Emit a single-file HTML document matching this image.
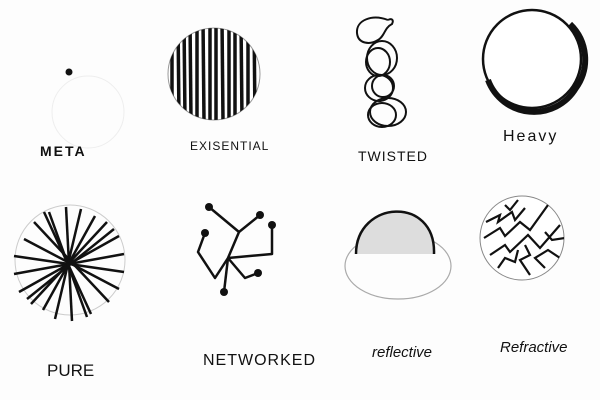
<!DOCTYPE html>
<html><head><meta charset="utf-8"><style>
html,body{margin:0;padding:0;background:#fff;}
svg{display:block}
text{font-family:"Liberation Sans",sans-serif;fill:#111;}
</style></head><body>
<svg width="600" height="400" viewBox="0 0 600 400" xmlns="http://www.w3.org/2000/svg">
<rect width="600" height="400" fill="#fdfdfd"/>
<!-- META -->
<circle cx="88" cy="112" r="36" fill="none" stroke="#eee" stroke-width="1"/>
<circle cx="69" cy="72" r="3.5" fill="#111"/>
<text x="40" y="156" font-size="14" letter-spacing="2" font-weight="bold">META</text>
<!-- Existential -->
<defs><clipPath id="c1"><circle cx="214" cy="74" r="46"/></clipPath>
<clipPath id="c2"><circle cx="522" cy="238" r="42"/></clipPath></defs>
<circle cx="214" cy="74" r="46" fill="#fff" stroke="#999" stroke-width="1"/>
<g clip-path="url(#c1)" stroke="#111" stroke-width="3.5">
<line x1="172" y1="20" x2="172" y2="120"/><line x1="178" y1="20" x2="179" y2="120"/>
<line x1="184" y1="20" x2="185" y2="120"/><line x1="190" y1="20" x2="191" y2="120"/>
<line x1="197" y1="20" x2="197" y2="120"/><line x1="203" y1="20" x2="204" y2="120"/>
<line x1="210" y1="20" x2="210" y2="120"/><line x1="216" y1="20" x2="216" y2="120"/>
<line x1="222" y1="20" x2="223" y2="120"/><line x1="229" y1="20" x2="229" y2="120"/>
<line x1="235" y1="20" x2="235" y2="120"/><line x1="241" y1="20" x2="242" y2="120"/>
<line x1="248" y1="20" x2="248" y2="120"/><line x1="254" y1="20" x2="255" y2="120"/>
</g>
<text x="190" y="150" font-size="12" letter-spacing="1">EXISENTIAL</text>
<!-- Twisted -->
<g fill="none" stroke="#111" stroke-width="2">
<path d="M388 20 C372 14 356 20 357 33 C358 44 370 45 378 40 C385 36 384 28 392 24 C394 20 392 18 388 20"/>
<ellipse cx="382" cy="58" rx="15" ry="17"/>
<ellipse cx="378" cy="62" rx="12" ry="14"/>
<ellipse cx="379" cy="88" rx="14" ry="13"/>
<ellipse cx="383" cy="86" rx="11" ry="11"/>
<ellipse cx="388" cy="112" rx="18" ry="14"/>
<ellipse cx="382" cy="115" rx="14" ry="12"/>
</g>
<text x="358" y="161" font-size="14" letter-spacing="1">TWISTED</text>
<!-- Heavy -->
<circle cx="532" cy="59" r="49" fill="#fff" stroke="#111" stroke-width="2.5"/>
<path d="M488 80 A49 49 0 0 0 576 88 A49 49 0 0 0 570 24" fill="none" stroke="#111" stroke-width="6"/>
<text x="503" y="141" font-size="16" letter-spacing="2">Heavy</text>
<!-- Pure -->
<circle cx="70" cy="260" r="55" fill="none" stroke="#ccc" stroke-width="1"/>
<g stroke="#111" stroke-width="2.5" transform="translate(69,264)">
<line x1="-3" y1="-57" x2="3" y2="57"/><line x1="-20" y1="-52" x2="18" y2="53"/>
<line x1="12" y1="-55" x2="-14" y2="55"/><line x1="26" y1="-48" x2="-26" y2="46"/>
<line x1="38" y1="-42" x2="-38" y2="40"/><line x1="50" y1="-28" x2="-50" y2="28"/>
<line x1="55" y1="-10" x2="-55" y2="10"/><line x1="55" y1="8" x2="-55" y2="-8"/>
<line x1="50" y1="25" x2="-45" y2="-25"/><line x1="40" y1="38" x2="-35" y2="-42"/>
<line x1="22" y1="50" x2="-25" y2="-52"/><line x1="45" y1="-35" x2="-42" y2="35"/>
</g>
<text x="47" y="376" font-size="17">PURE</text>
<!-- Networked -->
<g fill="none" stroke="#111" stroke-width="2.5" stroke-linejoin="round">
<path d="M209 207 L239 232 L228 258 L215 278 L198 252 L205 233"/>
<path d="M239 232 L260 215"/><path d="M228 258 L272 254 L272 225"/>
<path d="M228 258 L245 278 L258 273"/><path d="M228 258 L224 292"/>
</g>
<g fill="#111"><circle cx="209" cy="207" r="4"/><circle cx="260" cy="215" r="4"/><circle cx="205" cy="233" r="4"/><circle cx="272" cy="225" r="4"/><circle cx="258" cy="273" r="4"/><circle cx="224" cy="292" r="4"/></g>
<text x="203" y="365" font-size="16" letter-spacing="1">NETWORKED</text>
<!-- Reflective -->
<ellipse cx="398" cy="266" rx="53" ry="33" fill="none" stroke="#aaa" stroke-width="1.2"/>
<path d="M356 254 C356 200 436 195 434 254 Z" fill="#ddd" stroke="none"/>
<path d="M356 254 C356 200 436 195 434 254" fill="none" stroke="#111" stroke-width="2.5"/>
<text x="372" y="357" font-size="15" font-style="italic">reflective</text>
<!-- Refractive -->
<circle cx="522" cy="238" r="42" fill="#fff" stroke="#888" stroke-width="1"/>
<g clip-path="url(#c2)" fill="none" stroke="#111" stroke-width="2.2">
<path d="M486 222 L500 215 L498 222 L512 212 L515 220 L525 208"/>
<path d="M484 238 L500 228 L505 236 L520 222 L530 230 L548 205"/>
<path d="M490 255 L505 245 L510 252 L528 235 L540 248 L560 225"/>
<path d="M498 268 L505 258 L515 262 L518 250"/>
<path d="M530 275 L520 260 L530 255 L525 245"/>
<path d="M545 268 L535 258 L548 250 L560 258"/>
<path d="M545 232 L552 240 L565 238"/>
<path d="M505 205 L510 210 L518 200"/>
</g>
<text x="500" y="352" font-size="15" font-style="italic">Refractive</text>
</svg>
</body></html>
